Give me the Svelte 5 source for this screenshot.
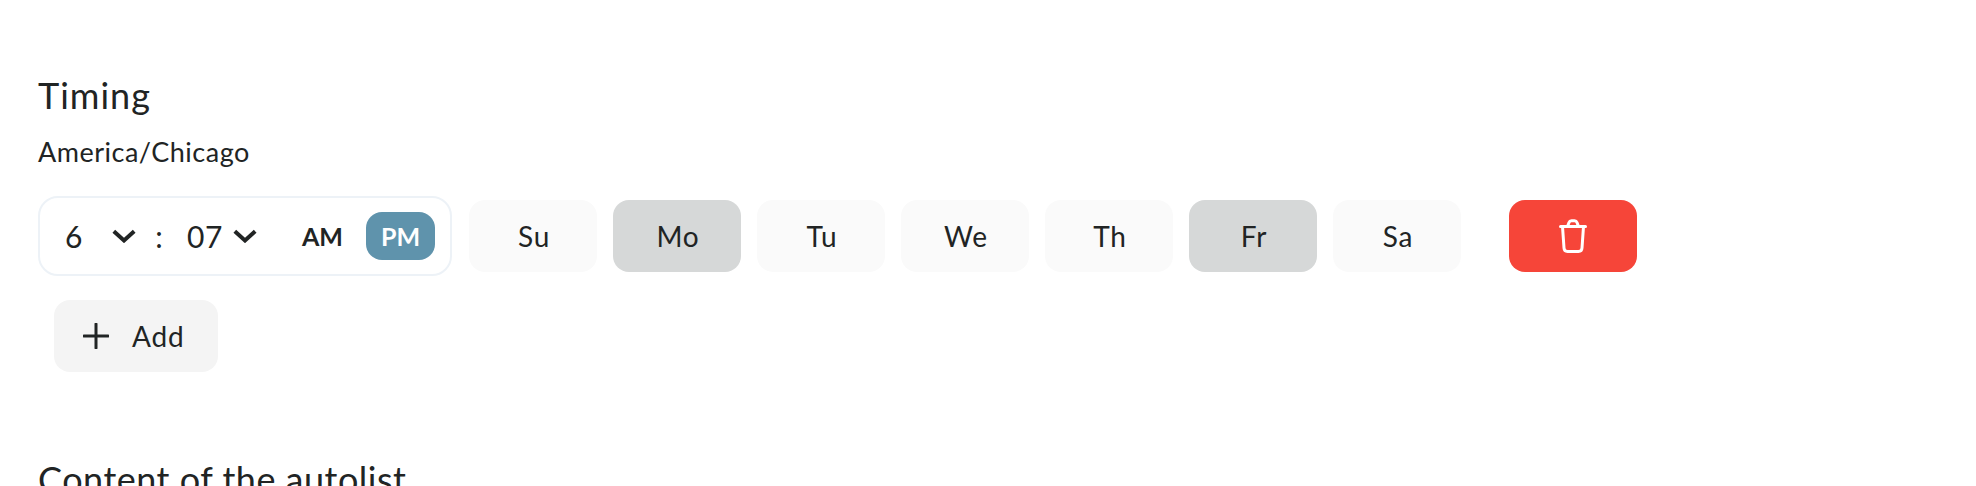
<script>
	const days = [
		{ label: 'Su', active: false },
		{ label: 'Mo', active: true },
		{ label: 'Tu', active: false },
		{ label: 'We', active: false },
		{ label: 'Th', active: false },
		{ label: 'Fr', active: true },
		{ label: 'Sa', active: false }
	];
</script>

<main class="page">
	<section class="timing">
		<h2 class="timing-title">Timing</h2>
		<p class="zone">America/Chicago</p>

		<div class="row">
			<div class="time">
				<span class="hour">6</span>
				<svg class="chevron" viewBox="0 0 24 14" aria-hidden="true">
					<path d="M1.8 2.3 L12 11.5 L22.2 2.3" />
				</svg>
				<span class="colon">:</span>
				<span class="minute">07</span>
				<svg class="chevron" viewBox="0 0 24 14" aria-hidden="true">
					<path d="M1.8 2.3 L12 11.5 L22.2 2.3" />
				</svg>
				<span class="am">AM</span>
				<span class="pm">PM</span>
			</div>

			<div class="days">
				{#each days as day}
					<button class="day" class:active={day.active}>{day.label}</button>
				{/each}
			</div>

			<button class="delete" aria-label="Delete">
				<svg viewBox="0 0 28 34" aria-hidden="true">
					<path d="M1.5 7.5 H26.5" />
					<path d="M3.5 7.5 L5 29 Q5.2 32.5 8.5 32.5 H19.5 Q22.8 32.5 23 29 L24.5 7.5" />
					<path d="M8.5 7.5 L10 3.5 Q10.6 1.8 12.5 1.8 H15.5 Q17.4 1.8 18 3.5 L19.5 7.5" />
				</svg>
			</button>
		</div>

		<button class="add">
			<svg viewBox="0 0 26 26" aria-hidden="true">
				<path d="M13 1 V25 M1 13 H25" />
			</svg>
			<span>Add</span>
		</button>
	</section>

	<h2 class="content-title">Content of the autolist</h2>
</main>

<style>
	:global(body) {
		background: #fff;
		color: #212424;
		font-family: 'Lato', 'Noto Sans', sans-serif;
		overflow: hidden;
	}

	.page {
		height: 486px;
		overflow: hidden;
		padding: 74px 0 0 38px;
		box-sizing: border-box;
	}

	h2 {
		margin: 0;
		font-size: 36px;
		font-weight: 400;
		line-height: 42px;
		letter-spacing: 0.5px;
	}

	.timing-title {
		letter-spacing: 1px;
	}

	.zone {
		margin: 18px 0 0;
		font-size: 27px;
		line-height: 36px;
		letter-spacing: 0.5px;
	}

	.row {
		display: flex;
		align-items: center;
		margin-top: 26px;
	}

	.time {
		display: flex;
		align-items: center;
		width: 414px;
		height: 80px;
		box-sizing: border-box;
		border: 2px solid #edf2f7;
		border-radius: 20px;
		padding: 0 15px 0 25px;
		font-size: 30px;
	}

	.hour {
		width: 47px;
	}

	.chevron {
		width: 24px;
		height: 14px;
		flex: none;
		fill: none;
		stroke: #212424;
		stroke-width: 4;
	}

	.colon {
		width: 10px;
		margin: 0 23px 0 18px;
		text-align: center;
	}

	.minute {
		width: 46px;
		letter-spacing: 0.5px;
	}

	.am {
		margin: 0 23px 0 auto;
		font-size: 25px;
		font-weight: 700;
	}

	.pm {
		display: flex;
		align-items: center;
		justify-content: center;
		width: 69px;
		height: 48px;
		border-radius: 16px;
		background: #5f93ac;
		color: #fff;
		font-size: 25px;
		font-weight: 700;
	}

	.days {
		display: flex;
		gap: 16px;
		margin-left: 17px;
	}

	button {
		border: none;
		padding: 0;
		font-family: inherit;
		color: inherit;
	}

	.day {
		width: 128px;
		height: 72px;
		padding-left: 2px;
		border-radius: 16px;
		background: #fafafa;
		font-size: 28px;
		letter-spacing: 0.8px;
	}

	.day.active {
		background: #d6d8d8;
	}

	.delete {
		display: flex;
		align-items: center;
		justify-content: center;
		width: 128px;
		height: 72px;
		margin-left: 48px;
		border-radius: 16px;
		background: #f64539;
	}

	.delete svg {
		width: 28px;
		height: 34px;
		fill: none;
		stroke: #fff;
		stroke-width: 3;
		stroke-linecap: round;
		stroke-linejoin: round;
	}

	.add {
		display: flex;
		align-items: center;
		width: 164px;
		height: 72px;
		margin: 24px 0 0 16px;
		padding-left: 29px;
		box-sizing: border-box;
		border-radius: 16px;
		background: #f4f4f4;
		font-size: 28px;
		letter-spacing: 0.8px;
	}

	.add svg {
		width: 26px;
		height: 26px;
		margin-right: 23px;
		fill: none;
		stroke: #212424;
		stroke-width: 3;
		stroke-linecap: round;
	}

	.content-title {
		margin-top: 86px;
	}
</style>
